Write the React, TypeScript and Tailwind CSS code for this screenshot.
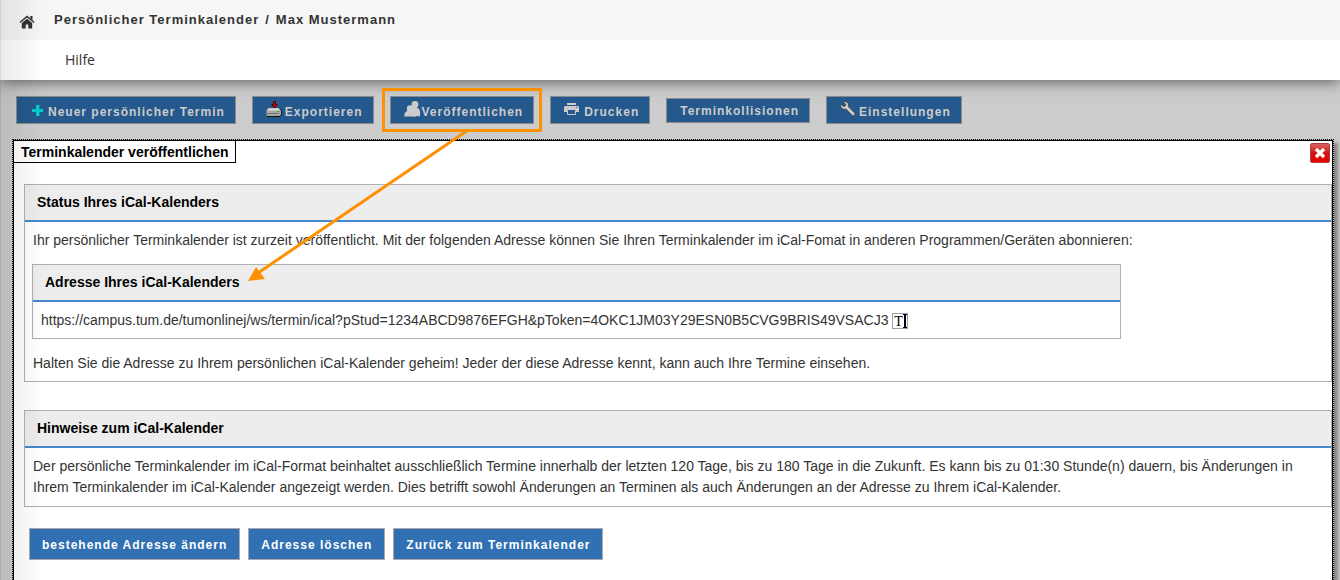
import type { ReactNode } from "react";

function HomeIcon() {
  return (
    <svg width="16" height="14" viewBox="0 0 16 14" fill="#333333" aria-hidden="true">
      <path d="M8 .6 15.600 7l-.9 1L8 2.500 1.300 8l-.9-1z" />
      <path d="M11.300 1h2.200v4.200l-2.200-1.900z" />
      <path d="M8 3.700 13.200 8v5.400H9.300V9.600H6.700v3.800H2.800V8z" />
    </svg>
  );
}

function PlusIcon() {
  return (
    <svg width="12" height="16" viewBox="0 0 12 16" fill="#06cccc" aria-hidden="true">
      <path d="M4 3h3.500v4H11v3H7.500v4H4v-4H0V7h4z" />
    </svg>
  );
}

function ExportIcon() {
  return (
    <svg width="16" height="16" viewBox="0 0 16 16" aria-hidden="true">
      <path d="M2.500 7h10.500l2 2.500v4l-1.500 1.500h-12L.500 14V9.500z" fill="#a9a9a4" />
      <path d="M2.500 7.500h10L14 9.500H1z" fill="#dededa" />
      <path d="M1 12.500h12" stroke="#6e6e6e" />
      <path d="M13.500 7.500l2 2V14l-1.500 1.500H1" stroke="#111" fill="none" />
      <path d="M11.500 10.500h2" stroke="#20b020" />
      <path d="M7.500.5h2v3h2L8.500 7 5.500 3.500h2z" fill="#cc0000" stroke="#3a0000" strokeWidth=".8" />
    </svg>
  );
}

function PeopleIcon() {
  return (
    <svg width="17" height="16" viewBox="0 0 17 16" fill="#cccccc" aria-hidden="true">
      <circle cx="11" cy="3.500" r="3.400" />
      <path d="M7.500 7c1-1.200 6-1.200 7.500 1 1.200 1.500 1.500 5.500.8 7.300H8z" />
      <circle cx="6" cy="7.500" r="3.200" />
      <path d="M.2 15.400c0-3 1.300-5.400 4.300-5.900h4.600l3 5.900z" />
    </svg>
  );
}

function PrintIcon() {
  return (
    <svg width="15" height="16" viewBox="0 0 15 16" aria-hidden="true">
      <path d="M3 2h9v2H3zM1 5h13l1 1v5h-3V8H3v3H0V6z" fill="#cccccc" />
      <path d="M3.500 8.500h8v5h-8z" fill="#25588c" stroke="#cccccc" />
      <path d="M12 6h1v1h-1z" fill="#25588c" />
    </svg>
  );
}

function WrenchIcon() {
  return (
    <svg width="16" height="16" viewBox="0 0 16 16" aria-hidden="true">
      <path
        d="M3.200.8 5.400.5C8 1 9 3.300 8.200 5.500l6.800 6.700c.6 1.300-1 3-2.500 2.600L6 8C3.500 9 .7 7.300.6 4.500L1 3.200l2.500 2.200 1.800-.5.400-1.600z"
        fill="#cccccc"
        stroke="#3a3a3a"
        strokeWidth=".8"
      />
    </svg>
  );
}

function TextCursorIcon() {
  return (
    <span className="relative inline-block h-4 w-4 border border-gray-400 align-middle font-['Liberation_Serif',serif] text-sm leading-4 text-black">
      <span className="pl-px">T</span>
      <svg className="absolute right-0 top-0" width="4" height="14" viewBox="0 0 4 14" aria-hidden="true">
        <path d="M0 .5h4M0 13.500h4" stroke="#000" />
        <path d="M2 0v14" stroke="#000" strokeWidth="2" />
      </svg>
    </span>
  );
}

function ToolButton({ icon, children }: { icon: ReactNode; children: ReactNode }) {
  return (
    <button
      type="button"
      className="flex h-7 items-center whitespace-nowrap border border-[#8a8a8a] bg-[#25588c] pl-[13px] pr-[10px] text-xs font-bold leading-4 tracking-[1px] text-[#cccccc]"
    >
      {icon}
      <span className="pt-1">{children}</span>
    </button>
  );
}

function ActionButton({ children }: { children: ReactNode }) {
  return (
    <button
      type="button"
      className="h-8 whitespace-nowrap border border-[#aaaaaa] bg-[#3070b3] px-3 pt-0.5 text-xs font-bold leading-4 tracking-[1px] text-white"
    >
      {children}
    </button>
  );
}

function Box({ title, children }: { title: string; children: ReactNode }) {
  return (
    <section className="border border-[#b0b0b0]">
      <h2 className="border-b-2 border-[#4888cf] bg-[#ededed] px-3 pb-[9px] pt-2 text-sm font-bold leading-[18px] text-black">
        {title}
      </h2>
      {children}
    </section>
  );
}

export default function App() {
  return (
    <div className="relative flex min-h-screen flex-col overflow-hidden bg-[#cccccc] font-['Liberation_Sans',Arial,sans-serif] text-sm text-[#333333]">
      <header className="shadow-[0_2px_14px_rgba(0,0,0,0.55)]">
        <div className="flex h-10 items-center bg-[#f6f6f6] pl-[19px]">
          <a href="#home" aria-label="Startseite" className="mt-1">
            <HomeIcon />
          </a>
          <h1 className="pl-[19px] text-[13px] font-bold leading-5 tracking-[1px]">
            Persönlicher Terminkalender<span className="px-1.5">/</span>Max Mustermann
          </h1>
        </div>
        <nav className="flex h-10 items-center bg-white pl-[65px]">
          <a href="#hilfe" className="font-['Open_Sans',sans-serif] text-sm leading-5">Hilfe</a>
        </nav>
      </header>

      <div className="flex items-start gap-4 px-4 pb-[15px] pt-4">
        <ToolButton icon={<span className="ml-0.5 mr-1"><PlusIcon /></span>}>Neuer persönlicher Termin</ToolButton>
        <ToolButton icon={<span className="mb-0.5 mr-[3px]"><ExportIcon /></span>}>Exportieren</ToolButton>

        <div className="relative">
          <ToolButton icon={<span className="mb-0.5 mr-px"><PeopleIcon /></span>}>Veröffentlichen</ToolButton>
          {/* highlight frame and pointer to the address box */}
          <div className="pointer-events-none absolute -inset-x-2 -inset-y-2 z-10 border-3 border-[#ff9000]" />
          <svg
            className="pointer-events-none absolute -left-36 top-8 z-10"
            width="224"
            height="156"
            viewBox="0 0 224 156"
            aria-hidden="true"
          >
            <path d="M222 2 12 145" stroke="#ff9000" strokeWidth="3" />
            <path d="M2 153 10 139 19 151z" fill="#ff9000" />
          </svg>
        </div>

        <ToolButton icon={<span className="mb-0.5 mr-[5px]"><PrintIcon /></span>}>Drucken</ToolButton>
        <button
          type="button"
          className="mt-0.5 h-[25px] whitespace-nowrap border border-[#8a8a8a] bg-[#25588c] pl-[13px] pr-[10px] text-xs font-bold leading-4 tracking-[1px] text-[#cccccc]"
        >
          Terminkollisionen
        </button>
        <ToolButton icon={<span className="mb-0.5 mr-[3px]"><WrenchIcon /></span>}>Einstellungen</ToolButton>
      </div>

      <div className="ml-3 mr-1.5 flex flex-1 flex-col border border-b-0 border-dotted border-black shadow-[4px_4px_3px_rgba(0,0,0,0.35)]">
        <main className="flex-1 border border-b-0 border-black bg-white pb-5">
          <div className="flex items-start justify-between">
            <div className="border-b border-r border-black px-[7px] pb-px pt-0.5 text-sm font-bold leading-[18px] text-black">
              Terminkalender veröffentlichen
            </div>
            <button
              type="button"
              aria-label="Schließen"
              className="mr-0.5 mt-0.5 flex h-5 w-5 items-center justify-center rounded-xs border border-[#b04040] bg-linear-to-b from-[#d86060] via-[#cc1111] to-[#e80000]"
            >
              <svg width="12" height="12" viewBox="0 0 12 12" aria-hidden="true">
                <path d="M2 2l8 8M10 2l-8 8" stroke="#fff" strokeWidth="3.200" />
              </svg>
            </button>
          </div>

          <div className="pl-[10px] pt-[21px]">
            <Box title="Status Ihres iCal-Kalenders">
              <div className="p-2">
                <p className="leading-5">
                  Ihr persönlicher Terminkalender ist zurzeit veröffentlicht. Mit der folgenden Adresse können Sie Ihren
                  Terminkalender im iCal-Fomat in anderen Programmen/Geräten abonnieren:
                </p>
                <div className="-ml-px my-[14px] max-w-[1089px]">
                  <Box title="Adresse Ihres iCal-Kalenders">
                    <p className="p-2 leading-5">
                      https://campus.tum.de/tumonlinej/ws/termin/ical?pStud=1234ABCD9876EFGH&amp;pToken=4OKC1JM03Y29ESN0B5CVG9BRIS49VSACJ3{" "}
                      <TextCursorIcon />
                    </p>
                  </Box>
                </div>
                <p className="leading-5">
                  Halten Sie die Adresse zu Ihrem persönlichen iCal-Kalender geheim! Jeder der diese Adresse kennt, kann
                  auch Ihre Termine einsehen.
                </p>
              </div>
            </Box>

            <div className="mt-7">
              <Box title="Hinweise zum iCal-Kalender">
                <p className="p-2 leading-[21px]">
                  Der persönliche Terminkalender im iCal-Format beinhaltet ausschließlich Termine innerhalb der letzten
                  120 Tage, bis zu 180 Tage in die Zukunft. Es kann bis zu 01:30 Stunde(n) dauern, bis Änderungen in
                  Ihrem Terminkalender im iCal-Kalender angezeigt werden. Dies betrifft sowohl Änderungen an Terminen als
                  auch Änderungen an der Adresse zu Ihrem iCal-Kalender.
                </p>
              </Box>
            </div>

            <div className="flex gap-2 pl-[5px] pt-[21px]">
              <ActionButton>bestehende Adresse ändern</ActionButton>
              <ActionButton>Adresse löschen</ActionButton>
              <ActionButton>Zurück zum Terminkalender</ActionButton>
            </div>
          </div>
        </main>
      </div>

      {/* soft shade along the left edge */}
      <div className="pointer-events-none absolute inset-y-0 left-0 w-11 border-l border-black/15 bg-linear-to-r from-black/8 to-transparent" />
    </div>
  );
}
